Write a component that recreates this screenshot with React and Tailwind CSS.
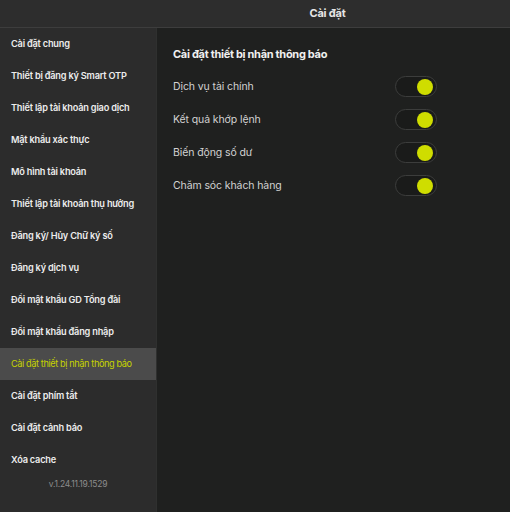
// Trang cài đặt — chọn thiết bị nhận thông báo
const menu = [
  'Cài đặt chung',
  'Thiết bị đăng ký Smart OTP',
  'Thiết lập tài khoản giao dịch',
  'Mật khẩu xác thực',
  'Mô hình tài khoản',
  'Thiết lập tài khoản thụ hưởng',
  'Đăng ký/ Hủy Chữ ký số',
  'Đăng ký dịch vụ',
  'Đổi mật khẩu GD Tổng đài',
  'Đổi mật khẩu đăng nhập',
  'Cài đặt thiết bị nhận thông báo',
  'Cài đặt phím tắt',
  'Cài đặt cảnh báo',
  'Xóa cache',
]

const options = ['Dịch vụ tài chính', 'Kết quả khớp lệnh', 'Biến động số dư', 'Chăm sóc khách hàng']

function Toggle() {
  return (
    <div className="w-[42px] h-[21px] rounded-full bg-[#1a1b1a] border border-[#3c3d3c] flex items-center justify-end pr-[3px]">
      <div className="w-[16px] h-[16px] rounded-full bg-[#cfdd00]" />
    </div>
  )
}

export default function App() {
  const active = 10

  return (
    <div className="w-[510px] h-[512px] flex flex-col bg-[#1f201f] overflow-hidden" style={{ fontFamily: 'Inter, "Liberation Sans", sans-serif' }}>
      <header className="h-[28px] shrink-0 bg-[#2d2d2d] border-b border-[#3d3d3d] flex items-center justify-center pl-[145px]">
        <span className="text-[11px] font-bold text-[#e6e6e6] tracking-[-0.2px]">Cài đặt</span>
      </header>

      <div className="flex flex-1 min-h-0">
        {/* Menu bên trái */}
        <aside className="w-[157px] shrink-0 bg-[#2c2c2c] border-r border-[#2f302f] flex flex-col">
          {menu.map((label, i) => (
            <div
              key={label}
              className={`h-[32px] flex items-center pl-[11px] text-[9.2px] whitespace-nowrap ${
                i === active ? 'bg-[#4b4b4b] text-[#c6d400] tracking-[-0.4px]' : 'text-[#ececec] font-semibold tracking-[-0.2px]'
              }`}
            >
              {label}
            </div>
          ))}
          <div className="h-[16px] flex items-center justify-center text-[8.5px] text-[#8d8d8d] tracking-[-0.2px]">v.1.24.11.19.1529</div>
        </aside>

        {/* Nội dung */}
        <main className="flex-1 pl-[16px] pt-[18px]">
          <h2 className="text-[11px] font-bold text-[#f0f0f0] h-[16px] flex items-center tracking-[-0.3px]">Cài đặt thiết bị nhận thông báo</h2>
          <div className="w-[264px] mt-[8px] flex flex-col">
            {options.map((label) => (
              <div key={label} className="h-[33px] flex items-center justify-between">
                <span className="text-[10.5px] text-[#d2d2d2] tracking-[-0.1px]">{label}</span>
                <Toggle />
              </div>
            ))}
          </div>
        </main>
      </div>
    </div>
  )
}
